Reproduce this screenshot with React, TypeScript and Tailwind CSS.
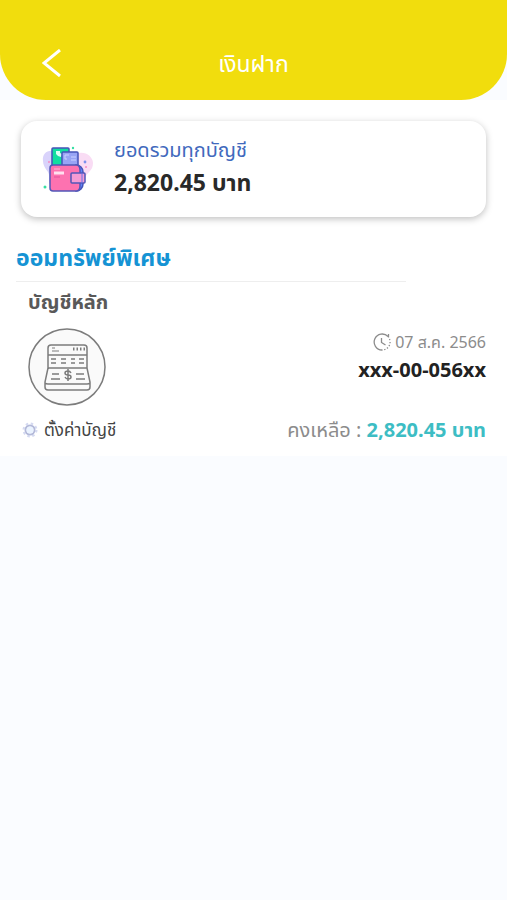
import type { ReactNode } from 'react'

interface Account {
  name: string
  number: string
  date: string
  balance: string
}

const account: Account = {
  name: 'บัญชีหลัก',
  number: 'xxx-00-056xx',
  date: '07 ส.ค. 2566',
  balance: '2,820.45',
}

function WalletIcon() {
  return (
    <svg viewBox="0 0 52 48" className="h-12 w-[52px] shrink-0" fill="none" aria-hidden="true">
      <path d="M1 16C0 9 5 5 11 6c8 0 14-1 20 3l6 14-4 20H12C4 39 9 32 6 27 3 23 1 20 1 16Z" fill="#d9d3fb" />
      <path d="M34 9c8-4 17 2 17 9 0 8-6 9-8 15l-9 3Z" fill="#f9dcf4" />
      <path d="M10 21V4q0-1 1-1h15q1 0 1 1v17" fill="#10dfa0" stroke="#4553b8" strokeWidth="1.5" />
      <path d="M14 6h4v2l2 1-1 3-3-1-2-2Z" fill="#d8fff2" />
      <path d="M20 21V8q0-1 1-1h14q1 0 1 1v13" fill="#98a4f5" stroke="#4553b8" strokeWidth="1.5" />
      <path d="M23 10h4m-4 0v4h2m4-2h5m-5 3h5" stroke="#cbd1ff" />
      <path d="M34 20c4 0 7 3 7 7v12c0 4-3 7-7 7Z" fill="#5f86f8" stroke="#4553b8" strokeWidth="1.5" />
      <path d="M11 20h23c3 0 4 2 4 5v16c0 3-1 5-4 5H11q-3 0-3-3V23q0-3 3-3Z" fill="#fd72b0" stroke="#5157b8" strokeWidth="1.5" />
      <path d="M30 28h12q1 0 1 1v8q0 1-1 1H30q-1 0-1-1v-8q0-1 1-1Z" fill="#f59bd4" stroke="#5157b8" strokeWidth="1.5" />
      <path d="M40 28v10" stroke="#6579e8" />
      <path d="M12 24h6" stroke="#ffb5d8" />
      <path d="M12 28h10" stroke="#ffe0ef" strokeWidth="3" />
      <path d="M12 32h6" stroke="#e1539c" />
      <circle cx="31" cy="3" r="1.2" fill="#36dfa3" />
      <circle cx="3" cy="42" r="1.5" fill="#36dfa3" />
      <circle cx="43" cy="17" r="1.4" fill="#7c91ed" />
      <circle cx="44" cy="22" r="1" fill="#f48cc5" />
      <circle cx="7" cy="17" r="1" fill="#f48cc5" />
    </svg>
  )
}

function PassbookIcon() {
  return (
    <svg viewBox="0 0 78 78" className="size-[78px]" fill="none" stroke="#7c7c7c" strokeWidth="1.5" aria-hidden="true">
      <circle cx="39" cy="39" r="38" fill="#fafafa" />
      <path d="M20 40V20q0-3 3-3h33q3 0 3 3v20M20 27h39M20 40h39l3 14v5q0 3-3 3H20q-3 0-3-3v-5l3-14M17 55q1 1 3 1h39q2 0 3-1" />
      <path d="M24 20h3m-3 3h7" strokeWidth="1" />
      <path d="M45 21h12" strokeWidth="3" strokeDasharray="1.5 2" />
      <path d="M23 31h5m5 0h5m5 0h4m4 0h5M23 35h5m5 0h5m5 0h4m4 0h5M24 46h7m-8 5h9m16-5h8m-8 5h9" />
      <path d="M43 45q-1-2-3-2-3 0-3 2t3 2 3 2-3 2q-2 0-3-2M40 41v12" />
    </svg>
  )
}

function ClockIcon() {
  return (
    <svg viewBox="0 0 18 18" className="size-[18px]" fill="none" stroke="#8c8c8c" strokeWidth="1.3" aria-hidden="true">
      <path d="M9 17A8 8 0 1 1 15 3.500M15.500 1v3.500M8.500 5v4.500l4 2.500" />
      <path d="M16.500 6A8 8 0 0 1 9 17" strokeDasharray="1.3 1.7" />
    </svg>
  )
}

function GearIcon() {
  return (
    <svg viewBox="0 0 16 16" className="size-4" fill="none" aria-hidden="true">
      <circle cx="8" cy="8" r="6.500" stroke="#d5daf1" strokeWidth="2" strokeDasharray="2.5 2.6" />
      <circle cx="8" cy="8" r="4.500" stroke="#b3b9d9" strokeWidth="2" />
      <circle cx="8" cy="8" r="3.500" fill="#eaf3ff" />
    </svg>
  )
}

function Header({ title }: { title: string }) {
  return (
    <header className="grid h-[100px] grid-cols-[1fr_auto_1fr] items-end rounded-b-[46px] bg-[#f1dd0d] px-8 pb-[17px] text-white">
      <button type="button" aria-label="ย้อนกลับ" className="flex size-10 items-center justify-center">
        <svg viewBox="0 0 20 28" className="h-7 w-5" fill="none" stroke="currentColor" strokeWidth="3" aria-hidden="true">
          <path d="M18 1 2 14l16 13" />
        </svg>
      </button>
      <h1 className="text-[23px] leading-10">{title}</h1>
    </header>
  )
}

function SummaryCard({ label, children }: { label: string; children: ReactNode }) {
  return (
    <section className="mx-[21px] flex h-24 items-center gap-5 rounded-2xl bg-white px-[21px] shadow-[0_2px_7px_rgba(0,0,0,0.25)]">
      <WalletIcon />
      <div className="pb-1.5">
        <p className="text-xl leading-8 text-[#4169bd]">{label}</p>
        <p className="text-[23px] leading-8 font-bold text-[#292929]">{children}</p>
      </div>
    </section>
  )
}

function AccountItem({ name, number, date, balance }: Account) {
  return (
    <article className="pr-[21px] pl-7">
      <h3 className="text-xl leading-10 font-bold text-[#595959]">{name}</h3>
      <div className="mt-1.5 flex items-start justify-between">
        <PassbookIcon />
        <div className="pt-0.5 text-right">
          <p className="flex items-center justify-end gap-1 text-base leading-6 text-[#8c8c8c]">
            <ClockIcon />
            {date}
          </p>
          <p className="text-xl leading-8 font-bold text-[#222]">{number}</p>
        </div>
      </div>
      <div className="-ml-1.5 flex items-center justify-between pt-2">
        <button type="button" className="flex items-center gap-1.5 text-[17px] leading-8 text-[#444]">
          <GearIcon />
          ตั้งค่าบัญชี
        </button>
        <p className="text-xl leading-8 text-[#8c8c8c]">
          คงเหลือ : <strong className="font-bold text-[#3dbdc4]">{balance} บาท</strong>
        </p>
      </div>
    </article>
  )
}

export default function App() {
  return (
    <div className="min-h-screen bg-[#fafcff] font-['Noto_Sans','Noto_Sans_Thai',sans-serif]">
      <Header title="เงินฝาก" />
      <main className="bg-white pt-[21px] pb-2.5">
        <SummaryCard label="ยอดรวมทุกบัญชี">{account.balance} บาท</SummaryCard>
        <section className="pt-5">
          <h2 className="mr-[20%] ml-4 border-b border-[#eee] pb-1 text-[23px] leading-10 font-bold text-[#1593d4]">
            ออมทรัพย์พิเศษ
          </h2>
          <AccountItem {...account} />
        </section>
      </main>
    </div>
  )
}
